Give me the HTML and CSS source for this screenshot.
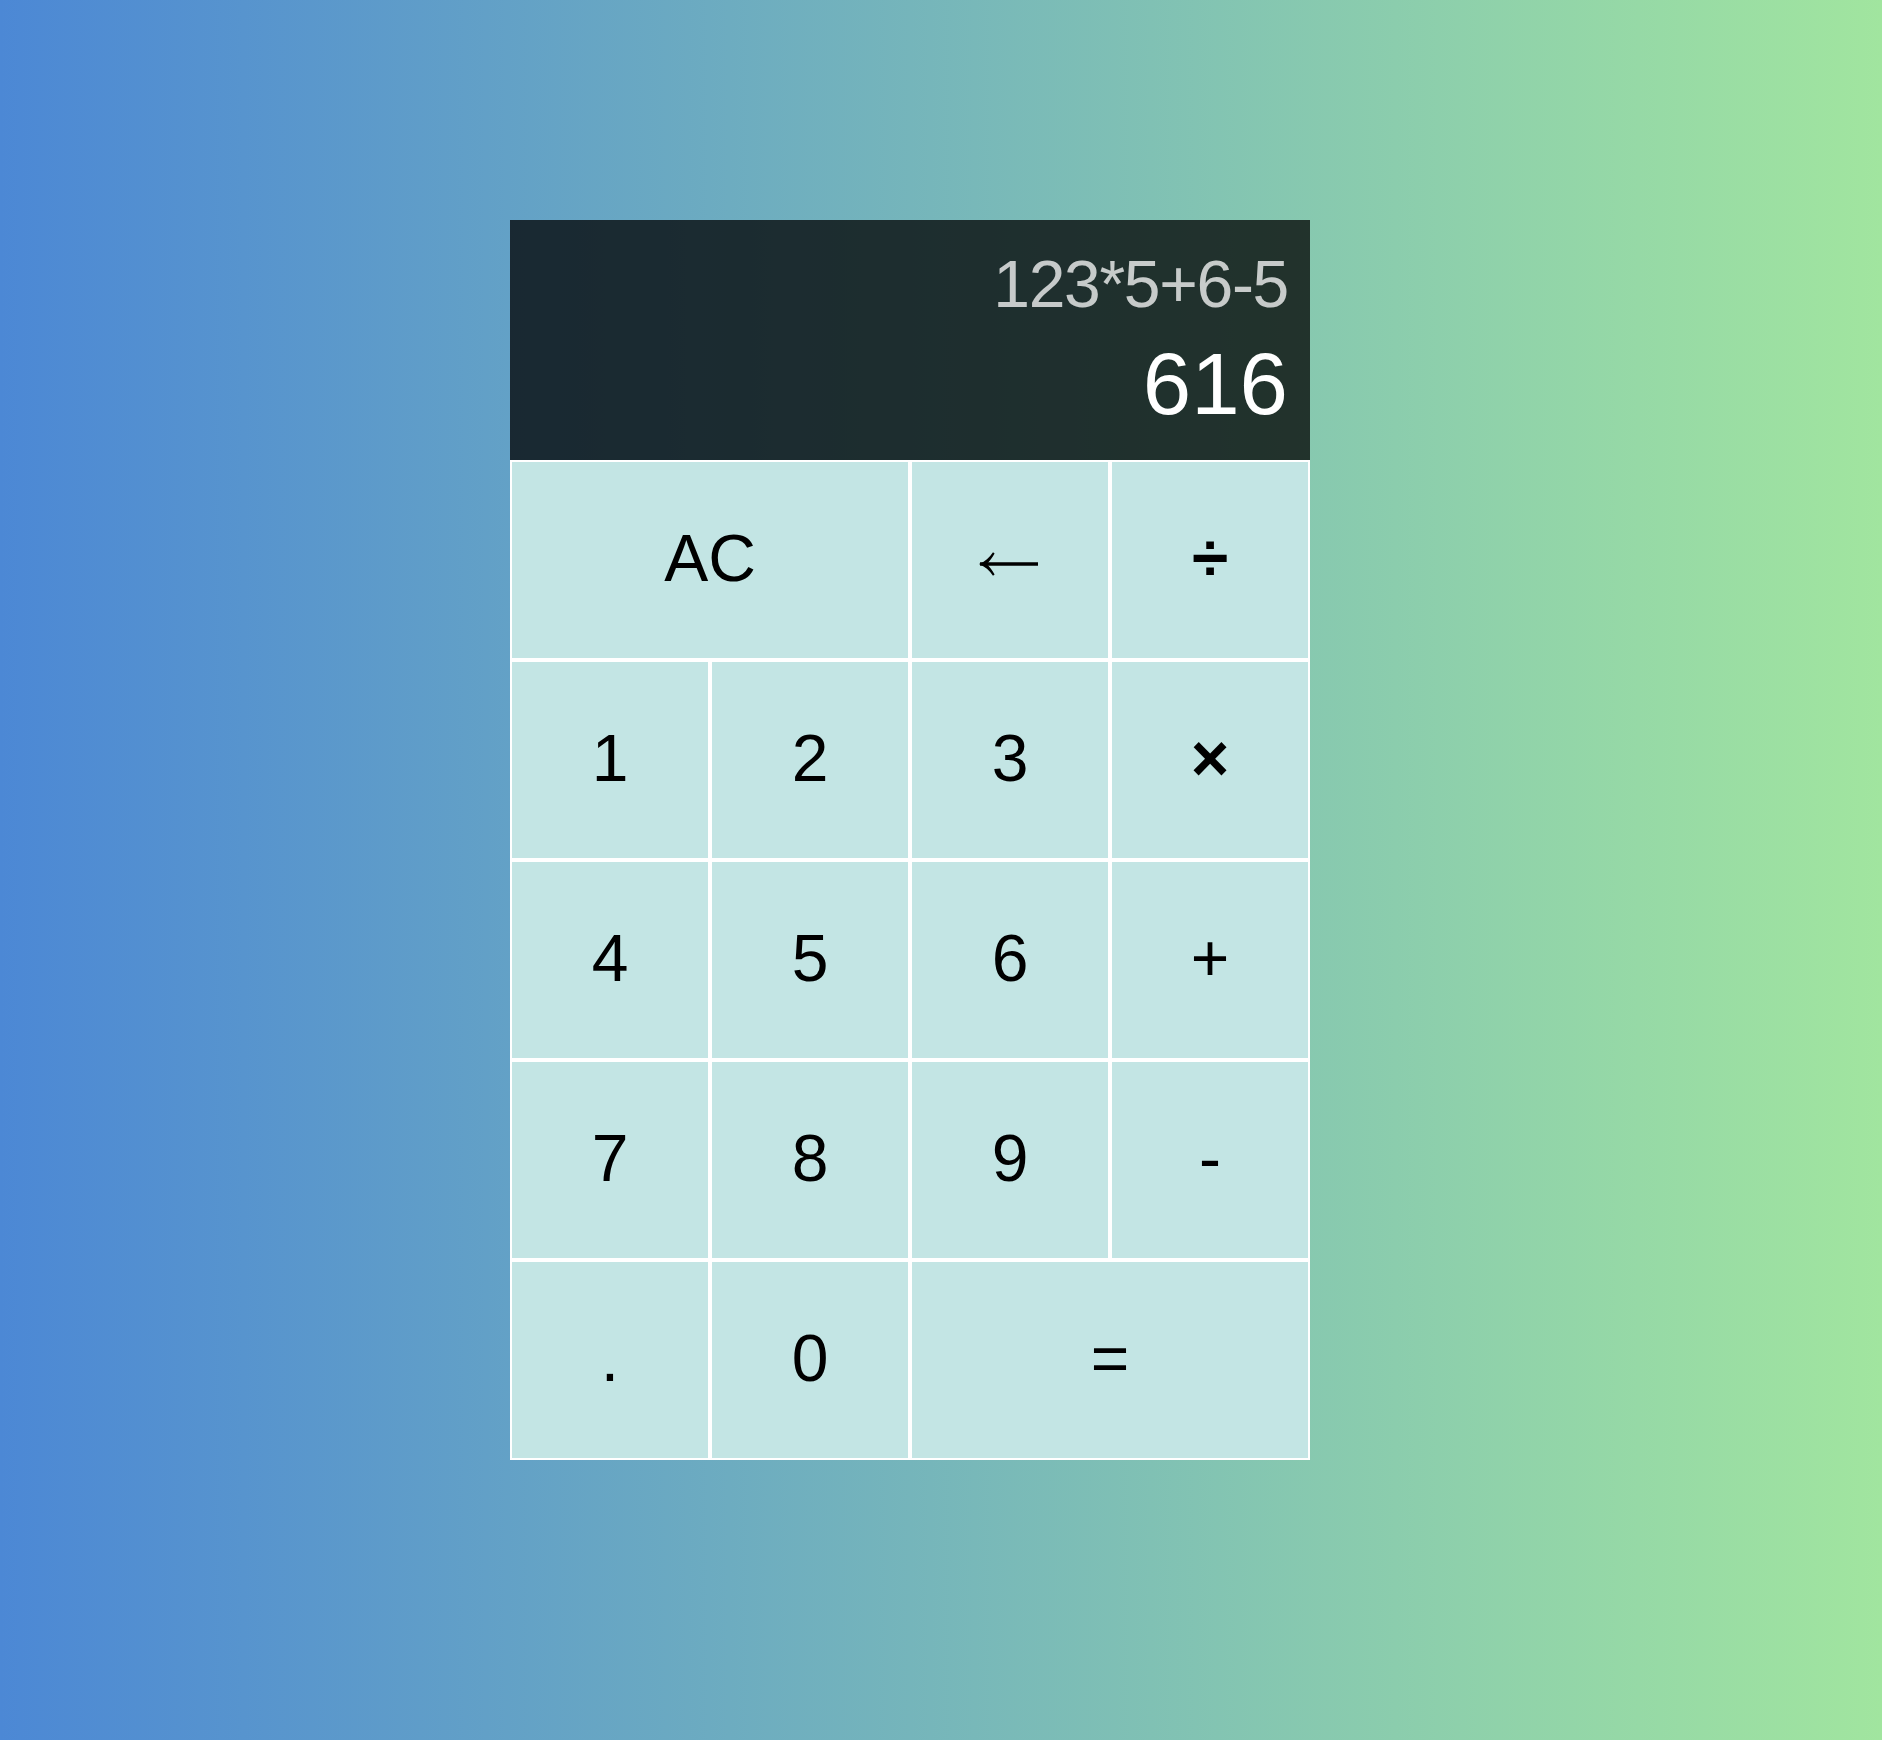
FILE: index.html
```html
<!DOCTYPE html>
<html lang="en">
<head>
<meta charset="utf-8">
<title>Calculator</title>
<link rel="stylesheet" href="styles.css">
</head>
<body>
<div class="calculator">
  <div class="output">
    <div class="previous">123*5+6-5</div>
    <div class="current">616</div>
  </div>
  <button class="key span-two">AC</button>
  <button class="key" aria-label="←"><svg class="arrow" width="62" height="26" viewBox="0 0 62 26"><path d="M3 13 H61" stroke="#000" stroke-width="3.6" fill="none"/><path d="M2 13 C8 10.5 12.5 6.5 16 1.2 L17.6 2.4 C15 7 12.5 10.4 9.5 13 C12.5 15.6 15 19 17.6 23.6 L16 24.8 C12.5 19.5 8 15.5 2 13 Z" fill="#000"/></svg></button>
  <button class="key op">÷</button>
  <button class="key">1</button>
  <button class="key">2</button>
  <button class="key">3</button>
  <button class="key op">×</button>
  <button class="key">4</button>
  <button class="key">5</button>
  <button class="key">6</button>
  <button class="key">+</button>
  <button class="key">7</button>
  <button class="key">8</button>
  <button class="key">9</button>
  <button class="key">-</button>
  <button class="key">.</button>
  <button class="key">0</button>
  <button class="key span-two">=</button>
</div>
</body>
</html>
```
FILE: styles.css
```css
* {
  box-sizing: border-box;
}

html, body {
  margin: 0;
  padding: 0;
}

body {
  width: 1882px;
  height: 1740px;
  background: linear-gradient(to right, #4c88d5, #a1e59f);
  font-family: "Liberation Sans", Arial, sans-serif;
  padding: 220px 0 0 510px;
}

.calculator {
  display: grid;
  grid-template-columns: repeat(4, 200px);
  grid-template-rows: 240px repeat(5, 200px);
  width: 800px;
}

.output {
  grid-column: 1 / -1;
  background-color: rgba(0, 0, 0, 0.75);
  display: flex;
  flex-direction: column;
  align-items: flex-end;
  padding: 31px 22px 0 0;
}

.previous {
  color: rgba(255, 255, 255, 0.75);
  font-size: 66px;
  line-height: 66px;
  letter-spacing: -1.3px;
}

.current {
  color: #ffffff;
  font-size: 87px;
  line-height: 87px;
  margin-top: 23px;
}

.key {
  font-family: "Liberation Sans", Arial, sans-serif;
  font-size: 66px;
  color: #000000;
  background-color: #c3e5e4;
  border: 2px solid #ffffff;
  outline: none;
  margin: 0;
  padding: 0 0 4px 0;
  display: flex;
  align-items: center;
  justify-content: center;
  cursor: pointer;
}

.key.op {
  font-weight: bold;
}

.arrow {
  display: block;
  margin-top: 11px;
  margin-right: 4px;
}

.span-two {
  grid-column: span 2;
}
```
